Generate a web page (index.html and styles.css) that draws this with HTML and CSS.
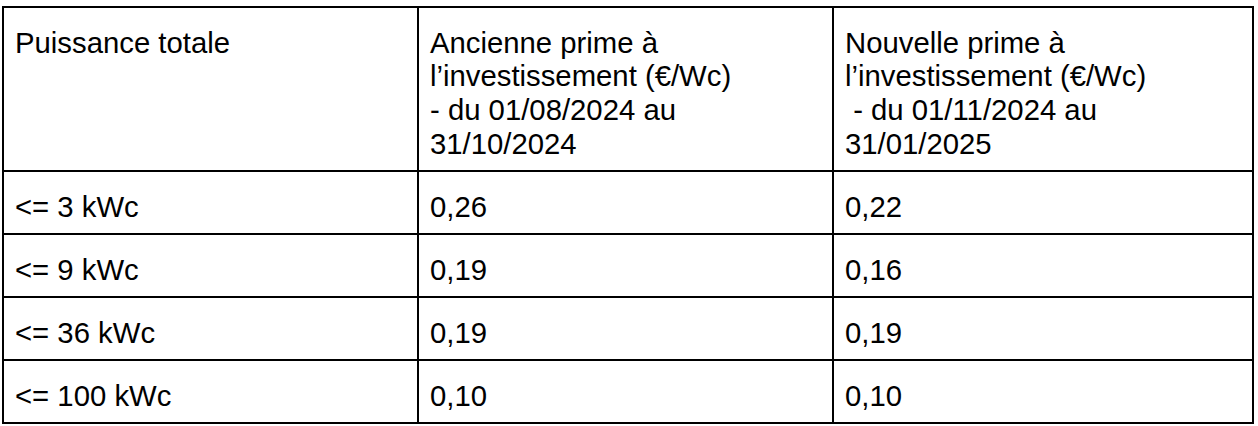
FILE: index.html
```html
<!DOCTYPE html>
<html lang="fr">
<head>
<meta charset="utf-8">
<title>Prime à l'investissement</title>
<link rel="stylesheet" href="styles.css">
</head>
<body>
<table class="prime-table">
  <colgroup>
    <col class="col-a">
    <col class="col-b">
    <col class="col-c">
  </colgroup>
  <tr class="head-row">
    <td>Puissance totale</td>
    <td>Ancienne prime à l’investissement (€/Wc)<br>- du 01/08/2024 au 31/10/2024</td>
    <td>Nouvelle prime à l’investissement (€/Wc)<br><span class="lead">&nbsp;- du 01/11/2024 au</span> 31/01/2025</td>
  </tr>
  <tr>
    <td>&lt;= 3 kWc</td>
    <td>0,26</td>
    <td>0,22</td>
  </tr>
  <tr>
    <td>&lt;= 9 kWc</td>
    <td>0,19</td>
    <td>0,16</td>
  </tr>
  <tr>
    <td>&lt;= 36 kWc</td>
    <td>0,19</td>
    <td>0,19</td>
  </tr>
  <tr>
    <td>&lt;= 100 kWc</td>
    <td>0,10</td>
    <td>0,10</td>
  </tr>
</table>
</body>
</html>
```
FILE: styles.css
```css
html, body {
  margin: 0;
  padding: 0;
  background: #ffffff;
}

body {
  font-family: "Liberation Sans", Arial, sans-serif;
  color: #000000;
}

.prime-table {
  margin: 6px 0 0 2px;
  width: 1250px;
  border-collapse: collapse;
  table-layout: fixed;
  border: 2px solid #000;
}

.col-a { width: 415px; }
.col-b { width: 415px; }
.col-c { width: 420px; }

.prime-table td {
  border: 2px solid #000;
  padding: 17.5px 11px 9.9px;
  font-size: 29.3px;
  line-height: 1.15;
  vertical-align: top;
  text-align: left;
}
```
